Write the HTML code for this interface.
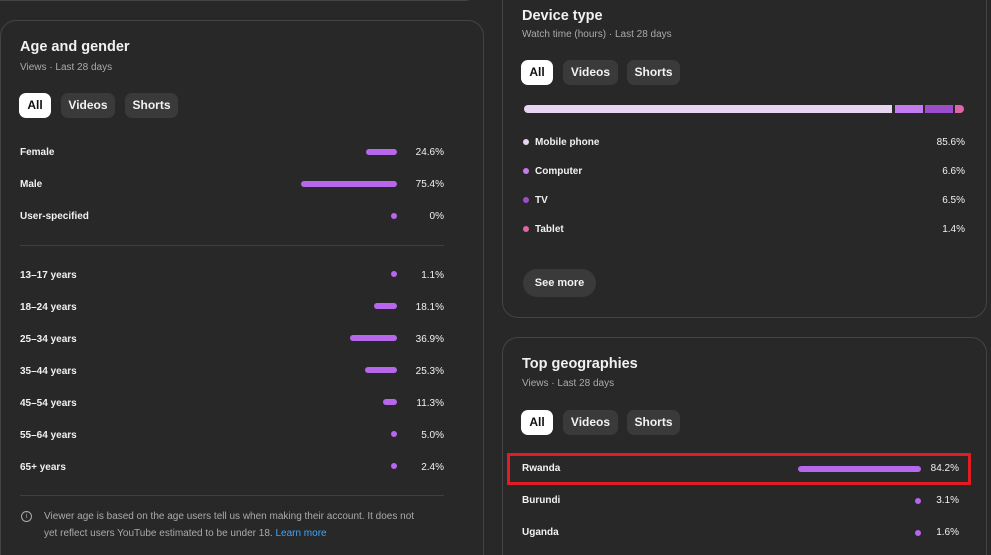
<!DOCTYPE html><html style="overflow:hidden;height:555px"><head><style>
body{margin:0;width:991px;height:555px;background:#282828;font-family:"Liberation Sans",sans-serif;color:#f1f1f1;position:relative;overflow:hidden}
.a{position:absolute}
.card{position:absolute;border:1px solid #444;border-radius:16px;box-sizing:border-box}
.h{font-size:14.5px;font-weight:bold}
.s{font-size:10px;color:#aaa}
.chip{position:absolute;height:25px;border-radius:7px;background:#3a3a3a;font-size:12px;font-weight:bold;line-height:25px;text-align:center}
.chip.on{background:#fff;color:#0f0f0f}
.l{position:absolute;font-size:10px;font-weight:bold;color:#f1f1f1}
.p{position:absolute;font-size:10px;text-align:right;width:60px}
.bar{position:absolute;height:6px;border-radius:3px;background:#b767ec}
.dot{position:absolute;width:6px;height:6px;border-radius:3px}
</style></head><body>
<div class="card" style="left:-20px;top:-40px;width:495px;height:41px;border-radius:10px"></div>
<div class="card" style="left:0;top:20px;width:484px;height:560px"></div>
<div class="card" style="left:502px;top:-20px;width:485px;height:338px"></div>
<div class="card" style="left:502px;top:337px;width:485px;height:240px"></div>

<div class="a h" style="left:20px;top:39px">Age and gender</div>
<div class="a s" style="left:20px;top:62px">Views · Last 28 days</div>
<div class="chip on" style="left:19px;top:93px;width:32px">All</div>
<div class="chip" style="left:61px;top:93px;width:54px">Videos</div>
<div class="chip" style="left:125px;top:93px;width:53px">Shorts</div>

<div class="l" style="left:20px;top:147px">Female</div><div class="bar" style="left:366px;top:149px;width:31px"></div><div class="p" style="left:384px;top:147px">24.6%</div>
<div class="l" style="left:20px;top:179px">Male</div><div class="bar" style="left:301px;top:181px;width:96px"></div><div class="p" style="left:384px;top:179px">75.4%</div>
<div class="l" style="left:20px;top:211px">User-specified</div><div class="bar" style="left:391px;top:213px;width:6px"></div><div class="p" style="left:384px;top:211px">0%</div>
<div class="a" style="left:20px;top:245px;width:424px;height:1px;background:#3f3f3f"></div>
<div class="l" style="left:20px;top:270px">13–17 years</div><div class="bar" style="left:391px;top:271px;width:6px"></div><div class="p" style="left:384px;top:270px">1.1%</div>
<div class="l" style="left:20px;top:302px">18–24 years</div><div class="bar" style="left:374px;top:303px;width:23px"></div><div class="p" style="left:384px;top:302px">18.1%</div>
<div class="l" style="left:20px;top:334px">25–34 years</div><div class="bar" style="left:350px;top:335px;width:47px"></div><div class="p" style="left:384px;top:334px">36.9%</div>
<div class="l" style="left:20px;top:366px">35–44 years</div><div class="bar" style="left:365px;top:367px;width:32px"></div><div class="p" style="left:384px;top:366px">25.3%</div>
<div class="l" style="left:20px;top:398px">45–54 years</div><div class="bar" style="left:383px;top:399px;width:14px"></div><div class="p" style="left:384px;top:398px">11.3%</div>
<div class="l" style="left:20px;top:430px">55–64 years</div><div class="bar" style="left:391px;top:431px;width:6px"></div><div class="p" style="left:384px;top:430px">5.0%</div>
<div class="l" style="left:20px;top:462px">65+ years</div><div class="bar" style="left:391px;top:463px;width:6px"></div><div class="p" style="left:384px;top:462px">2.4%</div>
<div class="a" style="left:20px;top:495px;width:424px;height:1px;background:#3f3f3f"></div>
<div class="a" style="left:21px;top:511px;width:9px;height:9px;border:1px solid #aaa;border-radius:50%;font-size:7px;color:#aaa;text-align:center;line-height:9px">i</div>
<div class="a" style="left:44px;top:509px;width:386px;font-size:10px;color:#aaa;line-height:16.5px">Viewer age is based on the age users tell us when making their account. It does not yet reflect users YouTube estimated to be under 18. <span style="color:#3ea6ff">Learn more</span></div>

<div class="a h" style="left:522px;top:8px">Device type</div>
<div class="a s" style="left:522px;top:29px">Watch time (hours) · Last 28 days</div>
<div class="chip on" style="left:521px;top:60px;width:32px">All</div>
<div class="chip" style="left:563px;top:60px;width:55px">Videos</div>
<div class="chip" style="left:627px;top:60px;width:53px">Shorts</div>
<div class="a" style="left:524px;top:105px;width:368px;height:8px;background:#e8d5f2;border-radius:4px 0 0 4px"></div>
<div class="a" style="left:895px;top:105px;width:28px;height:8px;background:#c37bf0"></div>
<div class="a" style="left:925px;top:105px;width:28px;height:8px;background:#9c4dcc"></div>
<div class="a" style="left:955px;top:105px;width:9px;height:8px;background:#e064a8;border-radius:0 4px 4px 0"></div>
<div class="dot" style="left:523px;top:139px;background:#e8d5f2"></div><div class="l" style="left:535px;top:137px">Mobile phone</div><div class="p" style="left:905px;top:137px">85.6%</div>
<div class="dot" style="left:523px;top:168px;background:#c37bf0"></div><div class="l" style="left:535px;top:166px">Computer</div><div class="p" style="left:905px;top:166px">6.6%</div>
<div class="dot" style="left:523px;top:197px;background:#9c4dcc"></div><div class="l" style="left:535px;top:195px">TV</div><div class="p" style="left:905px;top:195px">6.5%</div>
<div class="dot" style="left:523px;top:226px;background:#e064a8"></div><div class="l" style="left:535px;top:224px">Tablet</div><div class="p" style="left:905px;top:224px">1.4%</div>
<div class="chip" style="left:523px;top:269px;width:73px;height:28px;line-height:28px;border-radius:14px;font-size:11px">See more</div>

<div class="a h" style="left:522px;top:356px">Top geographies</div>
<div class="a s" style="left:522px;top:378px">Views · Last 28 days</div>
<div class="chip on" style="left:521px;top:410px;width:32px">All</div>
<div class="chip" style="left:563px;top:410px;width:55px">Videos</div>
<div class="chip" style="left:627px;top:410px;width:53px">Shorts</div>
<div class="a" style="left:507px;top:453px;width:458px;height:26px;border:3px solid #e31b23"></div>
<div class="l" style="left:522px;top:463px">Rwanda</div><div class="bar" style="left:798px;top:466px;width:123px"></div><div class="p" style="left:899px;top:463px">84.2%</div>
<div class="l" style="left:522px;top:495px">Burundi</div><div class="bar" style="left:915px;top:498px;width:6px"></div><div class="p" style="left:899px;top:495px">3.1%</div>
<div class="l" style="left:522px;top:527px">Uganda</div><div class="bar" style="left:915px;top:530px;width:6px"></div><div class="p" style="left:899px;top:527px">1.6%</div>
</body></html>
